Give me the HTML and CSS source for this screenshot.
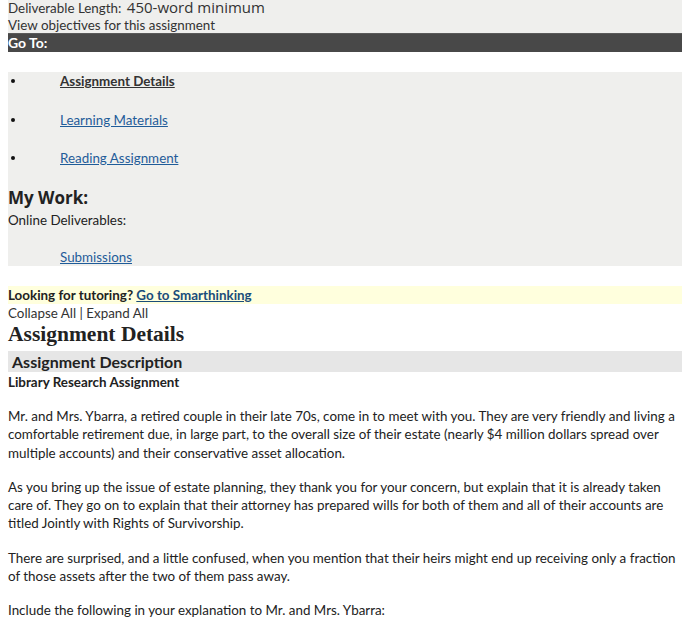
FILE: index.html
```html
<!DOCTYPE html>
<html>
<head>
<meta charset="utf-8">
<link rel="stylesheet" href="styles.css">
</head>
<body>
<div class="page">
  <div class="top">
    <div class="deliv"><span class="label">Deliverable Length:</span> <span class="big">450-word minimum</span></div>
    <div class="objectives">View objectives for this assignment</div>
  </div>
  <div class="goto">Go To:</div>
  <div class="nav">
    <ul class="navlist">
      <li><span class="dot"></span><a class="current" href="#">Assignment Details</a></li>
      <li><span class="dot"></span><a href="#">Learning Materials</a></li>
      <li><span class="dot"></span><a href="#">Reading Assignment</a></li>
    </ul>
    <div class="mywork">My Work:</div>
    <div class="online">Online Deliverables:</div>
    <div class="subs"><a href="#">Submissions</a></div>
  </div>
  <div class="tutor">Looking for tutoring? <a href="#">Go to Smarthinking</a></div>
  <div class="collapse">Collapse All | Expand All</div>
  <h1 class="details">Assignment Details</h1>
  <div class="descbar">Assignment Description</div>
  <div class="library">Library Research Assignment</div>
  <div class="body">
    <p>Mr. and Mrs. Ybarra, a retired couple in their late 70s, come in to meet with you. They are very friendly and living a comfortable retirement due, in large part, to the overall size of their estate (nearly $4 million dollars spread over multiple accounts) and their conservative asset allocation.</p>
    <p>As you bring up the issue of estate planning, they thank you for your concern, but explain that it is already taken care of. They go on to explain that their attorney has prepared wills for both of them and all of their accounts are titled Jointly with Rights of Survivorship.</p>
    <p>There are surprised, and a little confused, when you mention that their heirs might end up receiving only a fraction of those assets after the two of them pass away.</p>
    <p>Include the following in your explanation to Mr. and Mrs. Ybarra:</p>
  </div>
</div>
</body>
</html>
```
FILE: styles.css
```css
html, body { margin: 0; padding: 0; background: #fff; }
body { font-family: Lato, "Open Sans", sans-serif; font-size: 13.4px; color: #222; }
.page { width: 674px; margin-left: 8px; }
.top { background: #efefed; height: 33px; }
.deliv { height: 17px; line-height: 15px; color: #333; }
.deliv .label { font-size: 13.4px; }
.deliv .big { font-family: "Open Sans", sans-serif; font-size: 15px; color: #333; margin-left: 2px; }
.objectives { line-height: 16px; color: #333; font-size: 13.4px; }
.goto { background: #484848; height: 19px; line-height: 18px; color: #fff; font-weight: bold; font-size: 14px; border-top: 1px solid #5a5a5a; box-sizing: border-box; }
.nav { margin-top: 20px; background: #efefed; height: 194px; box-sizing: border-box; }
.navlist { list-style: none; margin: 0; padding: 0; }
.navlist li { display: flex; align-items: center; height: 18px; margin-bottom: 20.5px; }
.dot { width: 4px; height: 4px; border-radius: 50%; background: #111; margin-left: 3px; margin-right: 45px; }
a { color: #1f5c99; text-decoration: underline; }
a.current { color: #333; font-weight: bold; }
.mywork { font-family: "Open Sans", sans-serif; font-weight: bold; font-size: 17px; line-height: 20px; color: #222; }
.online { line-height: 16px; color: #222; margin-top: 4px; }
.subs { padding-left: 52px; margin-top: 21px; line-height: 16px; }
.tutor { margin-top: 20px; background: #ffffdd; height: 18px; line-height: 18px; font-weight: bold; color: #222; }
.tutor a { color: #1a4d7a; }
.collapse { line-height: 16px; color: #333; margin-top: 1px; }
.details { font-family: "Liberation Serif", serif; font-size: 21.5px; font-weight: bold; line-height: 26px; margin: 0 0 4px 0; color: #222; }
.descbar { background: #e6e6e6; height: 21px; line-height: 21px; padding-left: 4px; font-family: Lato, sans-serif; font-weight: bold; font-size: 16px; color: #222; }
.library { font-weight: bold; line-height: 18px; margin-top: 1px; color: #222; }
.body p { margin: 16px 0 0 0; line-height: 18.3px; color: #222; }
```
